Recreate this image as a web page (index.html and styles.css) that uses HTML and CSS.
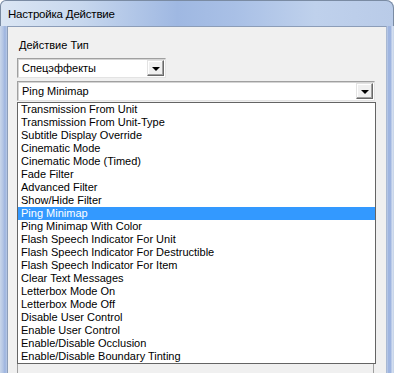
FILE: index.html
```html
<!DOCTYPE html>
<html lang="ru">
<head>
<meta charset="utf-8">
<title>Настройка Действие</title>
<link rel="stylesheet" href="styles.css">
</head>
<body>
<div class="window">
  <div class="titlebar"><span class="title">Настройка Действие</span></div>
  <div class="frame">
    <div class="client">
      <div class="label">Действие Тип</div>
      <div class="combo combo-small">
        <span class="combo-text">Спецэффекты</span>
        <span class="drop"><span class="tri"></span></span>
      </div>
      <div class="combo combo-wide">
        <span class="combo-text">Ping Minimap</span>
        <span class="drop"><span class="tri"></span></span>
      </div>
      <div class="listwrap">
        <ul class="list">
          <li>Transmission From Unit</li>
          <li>Transmission From Unit-Type</li>
          <li>Subtitle Display Override</li>
          <li>Cinematic Mode</li>
          <li>Cinematic Mode (Timed)</li>
          <li>Fade Filter</li>
          <li>Advanced Filter</li>
          <li>Show/Hide Filter</li>
          <li class="sel">Ping Minimap</li>
          <li>Ping Minimap With Color</li>
          <li>Flash Speech Indicator For Unit</li>
          <li>Flash Speech Indicator For Destructible</li>
          <li>Flash Speech Indicator For Item</li>
          <li>Clear Text Messages</li>
          <li>Letterbox Mode On</li>
          <li>Letterbox Mode Off</li>
          <li>Disable User Control</li>
          <li>Enable User Control</li>
          <li>Enable/Disable Occlusion</li>
          <li>Enable/Disable Boundary Tinting</li>
        </ul>
        <div class="under"></div>
      </div>
    </div>
  </div>
</div>
</body>
</html>
```
FILE: styles.css
```css
html, body {
  margin: 0;
  padding: 0;
  background: #ffffff;
  overflow: hidden;
}
.window {
  width: 394px;
  height: 373px;
  display: flex;
  flex-direction: column;
  border-radius: 6px 8px 0 0;
  background: linear-gradient(90deg, #dbe6f4 0%, #c8d8ee 20%, #9fb8e2 45%, #a9c0e6 60%, #bfd1ec 80%, #b9cbe8 100%);
  box-shadow: inset 0 0 0 1px #7a8ba3;
  overflow: hidden;
}
.titlebar {
  height: 26px;
  flex: none;
  display: flex;
  align-items: center;
  padding-left: 8px;
}
.title {
  font-family: "Liberation Sans", Arial, sans-serif;
  font-size: 11.5px;
  letter-spacing: -0.2px;
  color: #000;
  margin-top: 2px;
}
.frame {
  flex: 1;
  display: flex;
  padding: 0 8px 0 7px;
  background: linear-gradient(90deg, #c9d6ea 0px, #b3c5e4 3px, #9cb3df 5px, #b9cae6 7px, transparent 7px, transparent calc(100% - 8px), #c7d5eb calc(100% - 7px), #9fb5e0 calc(100% - 6px), #9fb5e0 calc(100% - 3px), #d8e2f1 calc(100% - 2px), #c4d2e8 100%);
}
.client {
  flex: 1;
  background: #f0f0f0;
  border-top: 1px solid #8c9db8;
  border-left: 1px solid #8c9db8;
  border-right: 1px solid #a8b8d2;
  padding: 12px 10px 0 9px;
  font-family: "Liberation Sans", Arial, sans-serif;
  font-size: 11px;
  color: #000;
  display: flex;
  flex-direction: column;
}
.label {
  height: 13px;
  line-height: 13px;
  padding-left: 2px;
}
.combo {
  box-sizing: border-box;
  height: 20px;
  background: #fff;
  border-top: 1px solid #a0a0a0;
  border-left: 1px solid #a0a0a0;
  border-bottom: 1px solid #e3e3e3;
  border-right: 1px solid #e3e3e3;
  box-shadow: inset 1px 1px 0 #d4d4d4;
  display: flex;
  align-items: center;
  justify-content: space-between;
  padding: 0 1px 0 4px;
}
.combo-small {
  margin-top: 6px;
  width: 149px;
}
.combo-wide {
  margin-top: 3px;
  width: 358px;
}
.combo-text {
  line-height: 13px;
}
.drop {
  box-sizing: border-box;
  width: 17px;
  height: 16px;
  background: #f0f0f0;
  border-top: 1px solid #e3e3e3;
  border-left: 1px solid #e3e3e3;
  border-right: 1px solid #696969;
  border-bottom: 1px solid #696969;
  box-shadow: inset -1px -1px 0 #a0a0a0, inset 1px 1px 0 #ffffff;
  display: flex;
  align-items: center;
  justify-content: center;
}
.tri {
  width: 0;
  height: 0;
  border-left: 4px solid transparent;
  border-right: 4px solid transparent;
  border-top: 4px solid #000;
  margin-top: 1px;
}
.listwrap {
  margin-top: 1px;
  display: flex;
  flex-direction: column;
}
.list {
  list-style: none;
  margin: 0;
  padding: 0;
  width: 359px;
  box-sizing: border-box;
  background: #fff;
  border: 1px solid #646464;
}
.list li {
  height: 13px;
  line-height: 13px;
  padding-left: 3px;
  white-space: nowrap;
}
.list li.sel {
  background: #3399ff;
  color: #fff;
}
.under {
  width: 357px;
  height: 12px;
  box-sizing: border-box;
  border-left: 1px solid #a0a0a0;
  border-right: 1px solid #a0a0a0;
  margin-left: 0;
  background: #f0f0f0;
}
```
